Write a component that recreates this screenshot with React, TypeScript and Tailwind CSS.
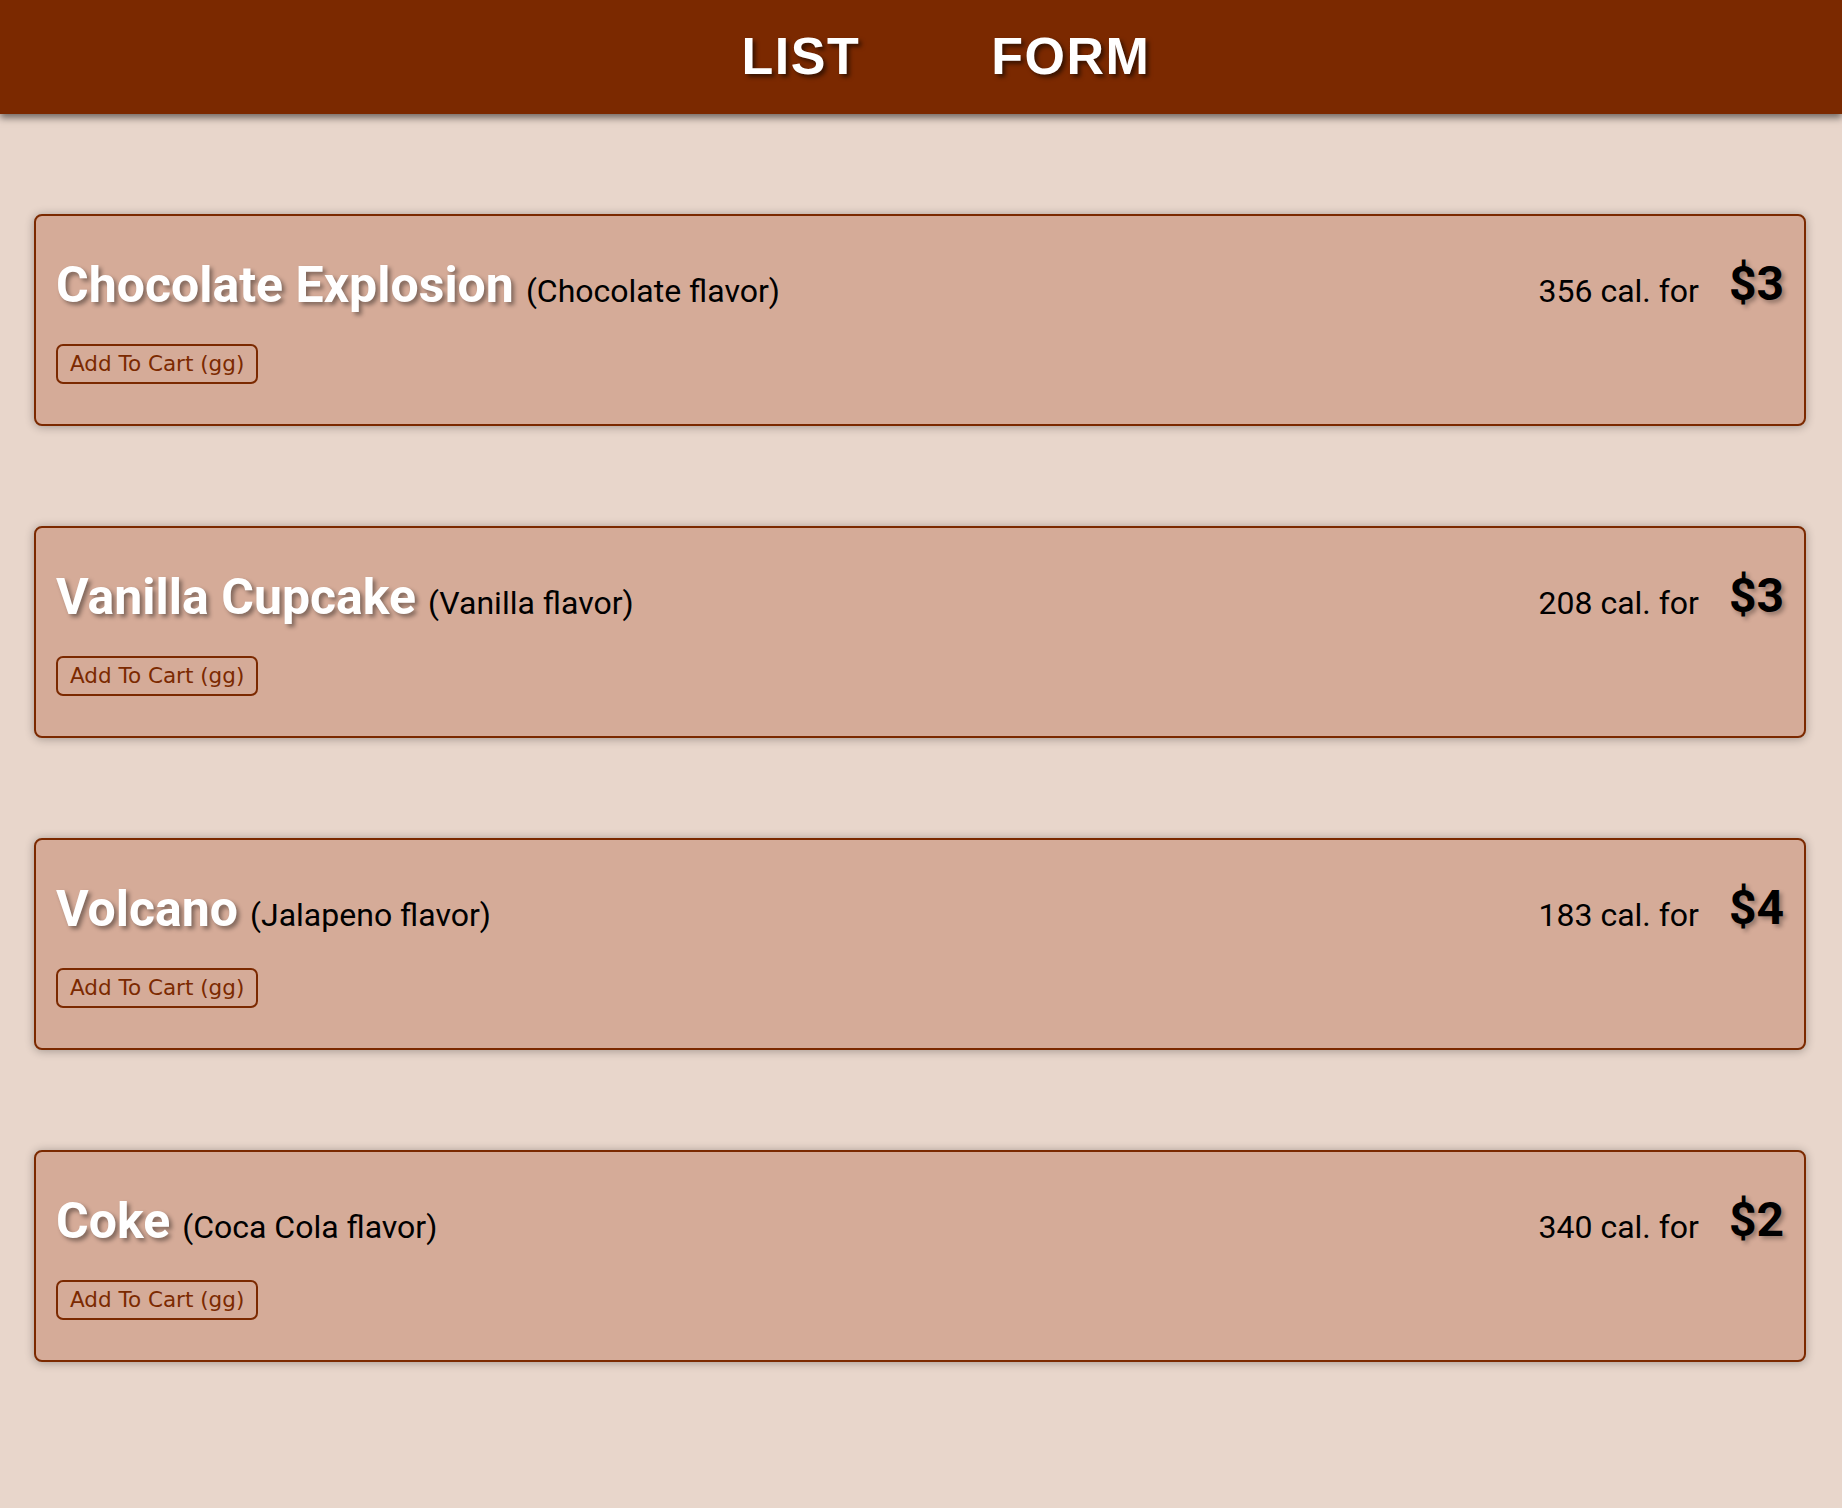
import React from "react";

const items = [
  { name: "Chocolate Explosion", flavor: "Chocolate", cal: 356, price: 3 },
  { name: "Vanilla Cupcake", flavor: "Vanilla", cal: 208, price: 3 },
  { name: "Volcano", flavor: "Jalapeno", cal: 183, price: 4 },
  { name: "Coke", flavor: "Coca Cola", cal: 340, price: 2 },
];

export default function App() {
  return (
    <div className="min-h-screen bg-[#e8d6cb]">
      <header className="relative z-10 h-[114px] bg-[#7b2900] shadow-[0_4px_7px_rgba(0,0,0,0.5)] flex items-center justify-center pl-[50px]">
        <nav className="flex gap-[131px] -mt-[2px]">
          {["LIST", "FORM"].map((t) => (
            <a
              key={t}
              className="text-white font-bold text-[52px] tracking-[1.5px] leading-normal [font-family:'Liberation_Sans',Arial,sans-serif] [text-shadow:3px_3px_4px_rgba(0,0,0,0.55)] cursor-pointer"
            >
              {t}
            </a>
          ))}
        </nav>
      </header>
      <main className="pt-[100px] pb-[147px] flex flex-col gap-[100px] ml-[34px] mr-[36px]">
        {items.map((it) => (
          <div
            key={it.name}
            className="rounded-[8px] border-2 border-[#7b2900] bg-[#d5ab98] shadow-[0_1px_10px_rgba(0,0,0,0.3)] px-[20px] pt-[42px] pb-[40px] [font-family:Roboto,sans-serif]"
          >
            <div className="flex items-baseline">
              <span className="text-white font-bold text-[50px] leading-[54px] [text-shadow:3px_3px_4px_rgba(0,0,0,0.4)]">
                {it.name}
              </span>
              <span className="ml-[12px] text-black text-[32px] leading-[32px]">
                ({it.flavor} flavor)
              </span>
              <span className="ml-auto text-black text-[32px] leading-[32px]">
                {it.cal} cal. for
              </span>
              <span className="ml-[30px] text-black font-bold text-[48px] leading-[48px] relative -top-[2px] [text-shadow:3px_3px_4px_rgba(0,0,0,0.3)]">
                ${it.price}
              </span>
            </div>
            <button className="mt-[32px] block rounded-[7px] border-2 border-[#7b2900] bg-transparent px-[12px] py-[6px] text-[21.5px] leading-[24px] text-[#7b2900] [font-family:'DejaVu_Sans',Verdana,sans-serif]">
              Add To Cart (gg)
            </button>
          </div>
        ))}
      </main>
    </div>
  );
}
